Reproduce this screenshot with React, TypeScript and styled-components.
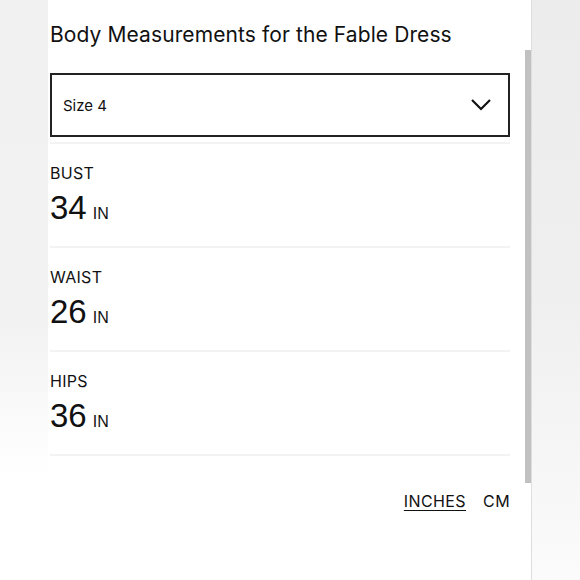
import React from "react";
import styled, { createGlobalStyle } from "styled-components";

const Global = createGlobalStyle`
  html, body { margin: 0; padding: 0; }
  body {
    width: 580px;
    height: 580px;
    overflow: hidden;
    background: #fff;
    font-family: "Inter", "Liberation Sans", sans-serif;
    color: #111;
  }
`;

const Page = styled.div`
  display: flex;
  width: 580px;
  height: 580px;
`;

const LeftGutter = styled.div`
  width: 48px;
  flex: none;
  background: linear-gradient(to bottom, #f1f1f1 0%, #f2f2f2 55%, #ffffff 82%);
`;

const RightArea = styled.div`
  flex: 1;
  background: linear-gradient(to bottom, #ececec 0%, #efefef 50%, #fbfbfb 100%);
`;

const Panel = styled.div`
  width: 484px;
  flex: none;
  background: #fff;
  border-right: 1px solid #dedede;
  display: flex;
  box-sizing: border-box;
`;

const Content = styled.div`
  width: 460px;
  margin-left: 2px;
  display: flex;
  flex-direction: column;
`;

const Title = styled.h1`
  margin: 22px 0 0 0;
  font-size: 21px;
  font-weight: 400;
  line-height: 26px;
  letter-spacing: 0.1px;
`;

const Select = styled.div`
  margin-top: 25px;
  height: 64px;
  box-sizing: border-box;
  border: 2px solid #222;
  display: flex;
  align-items: center;
  justify-content: space-between;
  padding: 0 16px 0 11px;
  font-size: 15px;
`;

const Row = styled.div`
  border-top: 2px solid #f3f3f3;
  height: 104px;
  box-sizing: border-box;
  padding-top: 19px;
  display: flex;
  flex-direction: column;
`;

const FirstDivider = styled.div`
  margin-top: 5px;
`;

const Label = styled.div`
  font-size: 16px;
  line-height: 20px;
  letter-spacing: 0.3px;
`;

const Value = styled.div`
  margin-top: 5px;
  display: flex;
  align-items: baseline;
  gap: 6px;
  font-family: "Liberation Sans", Arial, sans-serif;
`;

const Num = styled.span`
  font-size: 33px;
  line-height: 40px;
`;

const Unit = styled.span`
  font-size: 16px;
`;

const LastDivider = styled.div`
  border-top: 2px solid #f3f3f3;
`;

const Units = styled.div`
  margin-top: 35px;
  display: flex;
  justify-content: flex-end;
  gap: 17px;
  font-size: 16px;
  letter-spacing: 0.4px;
`;

const UnitLink = styled.span<{ $active?: boolean }>`
  text-decoration: ${(p) => (p.$active ? "underline" : "none")};
  text-underline-offset: 3px;
`;

const ScrollTrack = styled.div`
  margin-left: auto;
  width: 6px;
  display: flex;
  flex-direction: column;
`;

const ScrollThumb = styled.div`
  margin-top: 50px;
  height: 433px;
  background: #c1c1c1;
`;

const Chevron = () => (
  <svg width="22" height="14" viewBox="0 0 22 14" fill="none">
    <path d="M2 2 L11 11 L20 2" stroke="#111" strokeWidth="2.2" />
  </svg>
);

const rows = [
  { label: "BUST", value: 34 },
  { label: "WAIST", value: 26 },
  { label: "HIPS", value: 36 },
];

export default function App() {
  return (
    <>
      <Global />
      <Page>
        <LeftGutter />
        <Panel>
          <Content>
            <Title>Body Measurements for the Fable Dress</Title>
            <Select>
              <span>Size 4</span>
              <Chevron />
            </Select>
            <FirstDivider />
            {rows.map((r) => (
              <Row key={r.label}>
                <Label>{r.label}</Label>
                <Value>
                  <Num>{r.value}</Num>
                  <Unit>IN</Unit>
                </Value>
              </Row>
            ))}
            <LastDivider />
            <Units>
              <UnitLink $active>INCHES</UnitLink>
              <UnitLink>CM</UnitLink>
            </Units>
          </Content>
          <ScrollTrack>
            <ScrollThumb />
          </ScrollTrack>
        </Panel>
        <RightArea />
      </Page>
    </>
  );
}
